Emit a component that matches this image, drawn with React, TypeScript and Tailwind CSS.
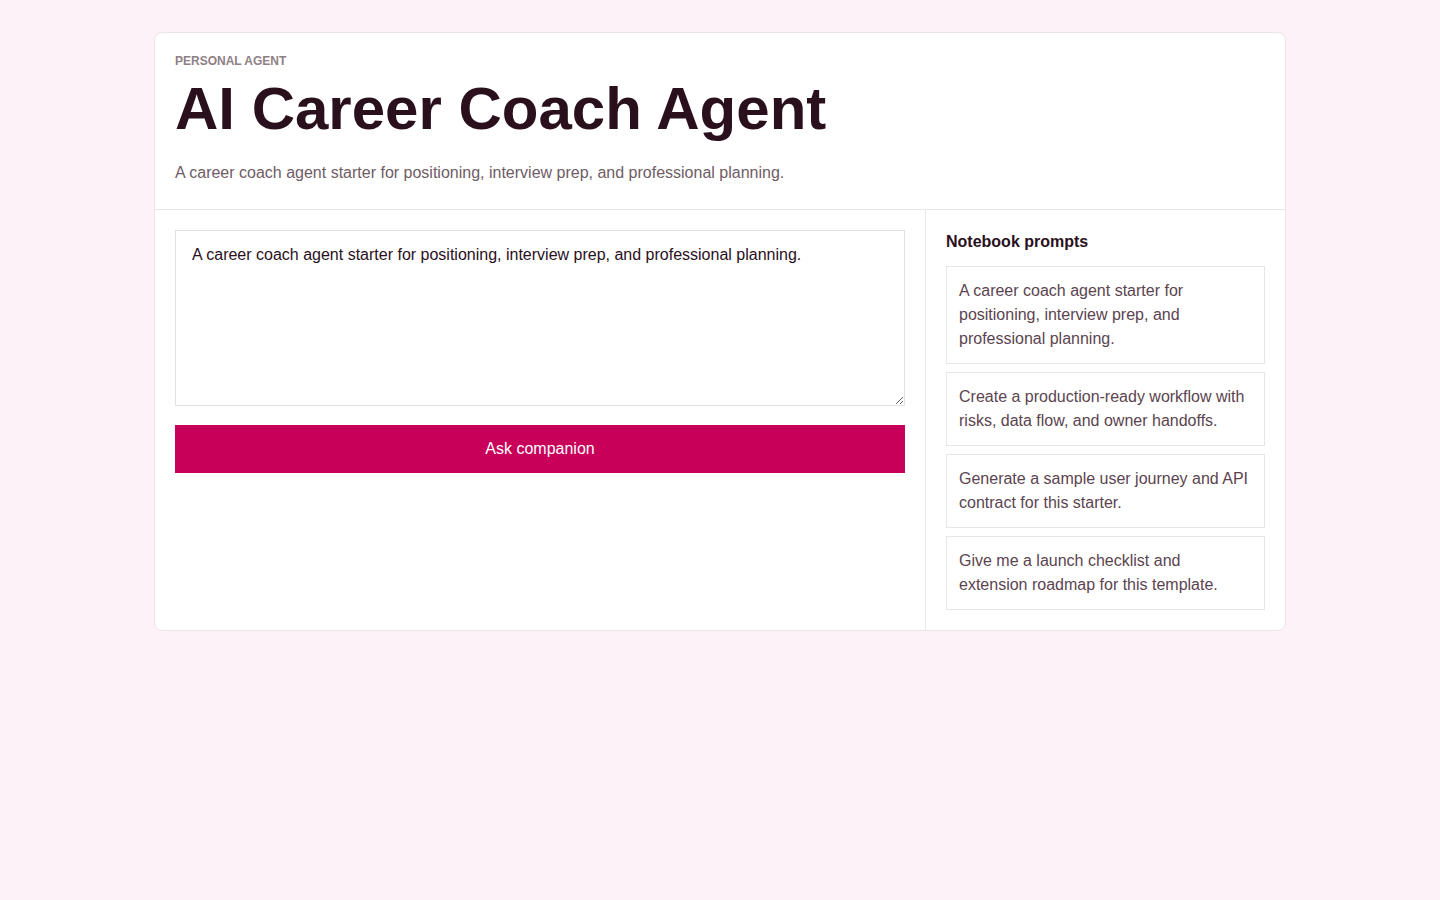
import { useState } from "react";

const prompts = [
  "A career coach agent starter for positioning, interview prep, and professional planning.",
  "Create a production-ready workflow with risks, data flow, and owner handoffs.",
  "Generate a sample user journey and API contract for this starter.",
  "Give me a launch checklist and extension roadmap for this template.",
];

export default function App() {
  const [text, setText] = useState(prompts[0]);

  return (
    <div className="min-h-screen bg-[#fdf2f7] pt-8 font-['Liberation_Sans',Arial,sans-serif]">
      <div className="mx-auto w-[1132px] bg-white border border-[#ece4e8] rounded-lg overflow-hidden">
        <header className="px-5 pt-5 pb-6 border-b border-[#ece6e9]">
          <div className="text-xs leading-4 font-bold uppercase text-[#8e7f86]">Personal agent</div>
          <h1 className="mt-[10px] text-[60px] leading-[60px] font-bold text-[#2a101d]">AI Career Coach Agent</h1>
          <p className="mt-[22px] text-base leading-6 text-[#6f5c66]">
            A career coach agent starter for positioning, interview prep, and professional planning.
          </p>
        </header>

        <div className="grid grid-cols-[1fr_359px]">
          <div className="p-5 flex flex-col gap-[19px] border-r border-[#ece6e9]">
            <textarea
              value={text}
              onChange={(e) => setText(e.target.value)}
              className="h-[176px] w-full border border-[#e6e0e3] px-4 py-3 text-base leading-6 text-[#2a101d] outline-none font-['Liberation_Sans',Arial,sans-serif]"
            />
            <button className="h-12 w-full bg-[#c8005a] text-white text-base">Ask companion</button>
          </div>

          <aside className="p-5">
            <h2 className="text-base leading-6 font-bold text-[#2a101d]">Notebook prompts</h2>
            <div className="mt-3 flex flex-col gap-2">
              {prompts.map((p, i) => (
                <button
                  key={i}
                  onClick={() => setText(p)}
                  className="text-left border border-[#ebe5e8] px-3 py-3 text-base leading-6 text-[#5b4450]"
                >
                  {p}
                </button>
              ))}
            </div>
          </aside>
        </div>
      </div>
    </div>
  );
}
